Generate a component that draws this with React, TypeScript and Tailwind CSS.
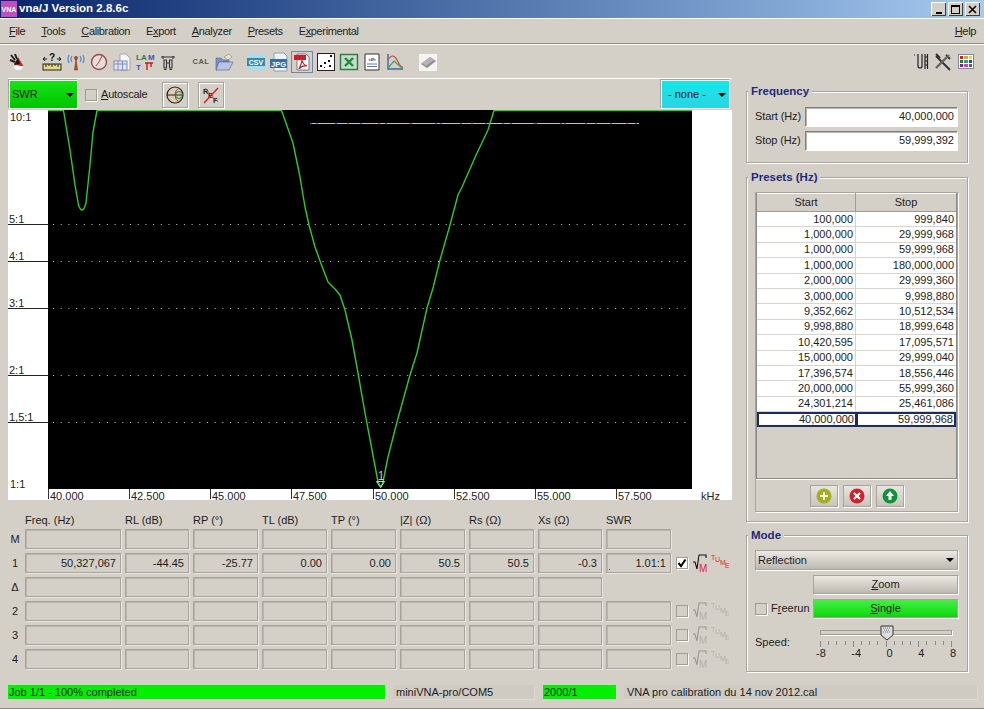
import type { ReactNode } from "react";

const PRESETS = [
  ["100,000", "999,840"],
  ["1,000,000", "29,999,968"],
  ["1,000,000", "59,999,968"],
  ["1,000,000", "180,000,000"],
  ["2,000,000", "29,999,360"],
  ["3,000,000", "9,998,880"],
  ["9,352,662", "10,512,534"],
  ["9,998,880", "18,999,648"],
  ["10,420,595", "17,095,571"],
  ["15,000,000", "29,999,040"],
  ["17,396,574", "18,556,446"],
  ["20,000,000", "55,999,360"],
  ["24,301,214", "25,461,086"],
  ["40,000,000", "59,999,968"],
];

const COLUMNS = [
  { title: "Freq. (Hz)", w: "w-[96px]" },
  { title: "RL (dB)", w: "w-[64px]" },
  { title: "RP (°)", w: "w-[65px]" },
  { title: "TL (dB)", w: "w-[65px]" },
  { title: "TP (°)", w: "w-[65px]" },
  { title: "|Z| (Ω)", w: "w-[65px]" },
  { title: "Rs (Ω)", w: "w-[65px]" },
  { title: "Xs (Ω)", w: "w-[64px]" },
  { title: "SWR", w: "w-[65px]" },
];

const ROWS: { label: string; values?: string[]; cols: number; marker?: "on" | "off" }[] = [
  { label: "M", cols: 9 },
  {
    label: "1",
    cols: 9,
    marker: "on",
    values: ["50,327,067", "-44.45", "-25.77", "0.00", "0.00", "50.5", "50.5", "-0.3", "1.01:1"],
  },
  { label: "Δ", cols: 8 },
  { label: "2", cols: 9, marker: "off" },
  { label: "3", cols: 9, marker: "off" },
  { label: "4", cols: 9, marker: "off" },
];

const GRID_LINES = [
  { y: 224, label: "5:1" },
  { y: 261, label: "4:1" },
  { y: 308, label: "3:1" },
  { y: 375, label: "2:1" },
  { y: 422, label: "1,5:1" },
];

const X_TICKS = [
  { x: 48, label: "40.000" },
  { x: 129, label: "42.500" },
  { x: 210, label: "45.000" },
  { x: 291, label: "47.500" },
  { x: 373, label: "50.000" },
  { x: 454, label: "52.500" },
  { x: 535, label: "55.000" },
  { x: 616, label: "57.500" },
];

const DIP_CURVE =
  "M48 110.5H63.5L70 150L75 185L78.5 205Q82.5 216 86 203L90 165L93 132L97 110.5H281.5L287 126L293 143L300 177L305 207L309 225L315 247L320 261L328 282L335 289L340 295L345 310L352 340L358 373L365 413L372 450L378 482L381 487L383 482L388 457L397 422L410 375L417 353L427 308L433 288L440 260L450 225L458 195L462 187L477 153L488 130L494 110.5H692";

function Mn({ children }: { children: ReactNode }) {
  return <span className="underline underline-offset-1">{children}</span>;
}

function Ruler() {
  return (
    <svg width="20" height="20" viewBox="0 0 20 20">
      <text x="10" y="9" textAnchor="middle" fontSize="10" fontWeight="700" fill="#111">?</text>
      <path d="M1 7h4M1 7l2-2M1 7l2 2M15 7h4M19 7l-2-2M19 7l-2 2" stroke="#111" fill="none" />
      <rect x="1" y="12" width="18" height="6" fill="#e8d880" stroke="#222" />
      <path d="M4 12v3M7 12v2M10 12v3M13 12v2M16 12v3" stroke="#222" />
    </svg>
  );
}

function Ant() {
  return (
    <svg width="20" height="20" viewBox="0 0 20 20">
      <path d="M3 3l4 5M7 2l2 5M2 8l5 2" stroke="#222" strokeWidth="2" />
      <path d="M6 12L10 5l6 10z" fill="#c8281e" />
      <path d="M10 6l2 6-6 1z" fill="#1a1a1a" />
      <path d="M5 14h11l-3 4H8z" fill="#f4f4f4" />
    </svg>
  );
}

function Antenna() {
  return (
    <svg width="20" height="20" viewBox="0 0 20 20" fill="none">
      <path d="M3 3Q1 7 3 11M17 3Q19 7 17 11M6 4Q4 7 6 10M14 4Q16 7 14 10" stroke="#5a8ac8" strokeWidth="1.2" />
      <circle cx="10" cy="6" r="2" fill="#a05020" />
      <path d="M8.5 18L10 7l1.5 11z" fill="#b05a20" stroke="#803010" strokeWidth=".6" />
    </svg>
  );
}

function Clock() {
  return (
    <svg width="20" height="20" viewBox="0 0 20 20" fill="none">
      <circle cx="10" cy="10" r="7.5" fill="#e4ddd8" stroke="#a04848" strokeWidth="1.4" />
      <path d="M10 10L13 4M10 10L7 14" stroke="#a04848" />
    </svg>
  );
}

function Sheet() {
  return (
    <svg width="20" height="20" viewBox="0 0 20 20">
      <path d="M8 2h6l4 4v12H8z" fill="#f6f6f6" stroke="#9aa4b8" />
      <rect x="2" y="9" width="13" height="9" fill="#dfe6f2" stroke="#8090b8" />
      <path d="M2 12h13M6 9v9M10.5 9v9" stroke="#8090b8" />
    </svg>
  );
}

function Lamt() {
  return (
    <svg width="20" height="20" viewBox="0 0 20 20" fontSize="8" fontWeight="700" fontFamily="Liberation Sans">
      <text x="1" y="8" fill="#208050">LA</text>
      <text x="13" y="8" fill="#3858a8">M</text>
      <text x="1" y="18" fill="#3858a8">T</text>
      <path d="M10 11h8M12 11v7M16 11v4" stroke="#c02020" strokeWidth="1.4" fill="none" />
    </svg>
  );
}

function Transistor() {
  return (
    <svg width="20" height="20" viewBox="0 0 20 20" fill="none" stroke="#333" strokeWidth="1.1">
      <path d="M3 5h14M5 4v3M15 4v3M6 8h2.5v8H6zM11.5 8H14v8h-2.5z" />
      <path d="M8.5 11h3M6 17.5h2.5M11.5 17.5H14" />
    </svg>
  );
}

function Cal() {
  return (
    <svg width="22" height="20" viewBox="0 0 22 20">
      <text x="11" y="12" textAnchor="middle" fontSize="7.5" fontWeight="700" letterSpacing=".5" fontFamily="Liberation Sans" fill="#555">CAL</text>
    </svg>
  );
}

function Folder() {
  return (
    <svg width="20" height="20" viewBox="0 0 20 20">
      <path d="M10 5l5-3 3 3-4 3z" fill="#e8e4c8" stroke="#8a8a70" strokeWidth=".6" />
      <path d="M2 6h5l2 2h6v2H6l-3 8H2z" fill="#7f93c4" stroke="#50608e" strokeWidth=".6" />
      <path d="M5 10h14l-4 8H2z" fill="#b8c4e4" stroke="#50608e" strokeWidth=".6" />
    </svg>
  );
}

function Csv() {
  return (
    <svg width="20" height="20" viewBox="0 0 20 20">
      <rect x="1" y="2" width="18" height="16" fill="#a8dcf0" />
      <rect x="1" y="6" width="18" height="8" fill="#3a86a8" />
      <text x="10" y="13" textAnchor="middle" fontSize="7" fontWeight="700" fontFamily="Liberation Sans" fill="#fff">CSV</text>
    </svg>
  );
}

function Jpg() {
  return (
    <svg width="20" height="20" viewBox="0 0 20 20">
      <path d="M5 1h10l3 3v15H5z" fill="#eef2f6" stroke="#8ca0b4" />
      <rect x="1" y="7" width="17" height="9" fill="#3b6ea4" />
      <text x="9.5" y="14.5" textAnchor="middle" fontSize="7.5" fontWeight="700" fontFamily="Liberation Sans" fill="#fff">JPG</text>
    </svg>
  );
}

function Pdf() {
  return (
    <svg width="20" height="20" viewBox="0 0 20 20">
      <path d="M5 2h9l3 3v13H5z" fill="#fff" stroke="#777" />
      <rect x="2" y="3" width="12" height="5" fill="#c8202a" />
      <path d="M7 17Q10 10 10 8Q11 13 15 14Q10 13 7 17z" fill="none" stroke="#c8202a" strokeWidth="1.2" />
    </svg>
  );
}

function Dots() {
  return (
    <svg width="20" height="20" viewBox="0 0 20 20">
      <rect x="1.5" y="1.5" width="17" height="17" fill="#fff" stroke="#222" />
      <g fill="#111">
        <rect x="4" y="13" width="2" height="2" />
        <rect x="8" y="10" width="2" height="2" />
        <rect x="12" y="8" width="2" height="2" />
        <rect x="14" y="3" width="2" height="2" />
        <rect x="13" y="13" width="2" height="2" />
        <rect x="8" y="15" width="1" height="1" />
      </g>
    </svg>
  );
}

function Excel() {
  return (
    <svg width="20" height="20" viewBox="0 0 20 20">
      <rect x="1.5" y="2.5" width="17" height="15" fill="#c4dcc8" stroke="#2a7a48" strokeWidth="1.4" />
      <path d="M6 6l8 8M14 6l-8 8" stroke="#1e8a3c" strokeWidth="2.4" />
    </svg>
  );
}

function Xml() {
  return (
    <svg width="20" height="20" viewBox="0 0 20 20">
      <path d="M3 2h14v16H3z" fill="#fff" stroke="#333" />
      <text x="10" y="9" textAnchor="middle" fontSize="6" fontWeight="700" fontFamily="Liberation Sans" fill="#1c5aa8">‹ø›</text>
      <path d="M5 12h10M5 14.5h10" stroke="#5478b8" />
    </svg>
  );
}

function ChartIcon() {
  return (
    <svg width="20" height="20" viewBox="0 0 20 20" fill="none">
      <path d="M3 2v15h15" stroke="#3a68b4" strokeWidth="1.4" />
      <path d="M3 8Q8 0 12 8T18 15" stroke="#d04848" strokeWidth="1.2" />
      <path d="M3 16L9 9l9 8" stroke="#40a050" strokeWidth="1.2" />
    </svg>
  );
}

function Chip() {
  return (
    <svg width="22" height="20" viewBox="0 0 22 20">
      <rect x="2" y="2" width="18" height="17" fill="#f4f4f2" />
      <path d="M4 12l9-7 6 4-9 7z" fill="#8c8c8c" />
      <path d="M5 11l8-6 4 3-8 6z" fill="#b4b4b4" />
    </svg>
  );
}

function Thermo() {
  return (
    <svg width="20" height="20" viewBox="0 0 20 20" fill="none" stroke="#222" strokeWidth="1.2">
      <path d="M7 2v12a2 2 0 0 0 4 0V2M14 2v15M16.5 2v15M14 5h3M14 9h3M14 13h3" />
      <path d="M3 3h1" />
    </svg>
  );
}

function Tools() {
  return (
    <svg width="20" height="20" viewBox="0 0 20 20" fill="none" stroke="#333" strokeWidth="2">
      <path d="M3 4l14 14M13 3l4 4" />
      <path d="M16 3L3 16" strokeWidth="2.4" stroke="#666" />
      <path d="M3 2l4 4" />
    </svg>
  );
}

function Palette() {
  const colors = ["#d02020", "#e8a020", "#e8e020", "#208020", "#20a0a0", "#2040c0", "#8020a0", "#e040a0", "#606060"];
  return (
    <div className="grid h-[15px] w-[16px] grid-cols-3 gap-px border border-[#8088a0] bg-white p-px">
      {colors.map((c) => (
        <span key={c} style={{ backgroundColor: c }} />
      ))}
    </div>
  );
}

const LEFT_ICONS = [
  { el: <Ant />, cls: "" },
  { el: <Ruler />, cls: "ml-[14px]" },
  { el: <Antenna />, cls: "ml-[4px]" },
  { el: <Clock />, cls: "ml-[3px]" },
  { el: <Sheet />, cls: "ml-[3px]" },
  { el: <Lamt />, cls: "ml-[3px]" },
  { el: <Transistor />, cls: "ml-[3px]" },
  { el: <Cal />, cls: "ml-[12px]" },
  { el: <Folder />, cls: "ml-[2px]" },
  { el: <Csv />, cls: "ml-[12px]" },
  { el: <Jpg />, cls: "ml-[3px]" },
  { el: <Pdf />, cls: "ml-[3px] outline outline-[#6f87ad]" },
  { el: <Dots />, cls: "ml-[4px]" },
  { el: <Excel />, cls: "ml-[3px]" },
  { el: <Xml />, cls: "ml-[3px]" },
  { el: <ChartIcon />, cls: "ml-[3px]" },
  { el: <Chip />, cls: "ml-[12px]" },
];

function TitleBar() {
  return (
    <div className="flex h-[18px] items-center bg-gradient-to-r from-[#0a246a] to-[#a6caf0] pl-[1px] pr-[4px]">
      <div className="flex h-[16px] w-[16px] items-center justify-center bg-[#c050c0] text-[7px] font-bold leading-none text-white">
        VNA
      </div>
      <span className="ml-[2px] text-[11.5px] font-bold text-white">vna/J Version 2.8.6c</span>
      <div className="ml-auto flex gap-[2px]">
        <WinButton>
          <span className="mt-[8px] h-[2px] w-[6px] bg-black" />
        </WinButton>
        <WinButton>
          <span className="h-[9px] w-[9px] border border-t-2 border-black" />
        </WinButton>
        <WinButton>
          <svg width="9" height="9" viewBox="0 0 9 9">
            <path d="M1 1l7 7M8 1l-7 7" stroke="#000" strokeWidth="1.6" />
          </svg>
        </WinButton>
      </div>
    </div>
  );
}

function WinButton({ children }: { children: ReactNode }) {
  return (
    <div className="flex h-[14px] w-[15px] items-center justify-center bg-[#d4d0c8] shadow-[inset_1px_1px_0_#fff,inset_-1px_-1px_0_#404040]">
      {children}
    </div>
  );
}

function MenuBar() {
  return (
    <div className="flex h-[26px] items-center gap-[16px] border-y border-t-white border-b-[#8c8a84] pl-[9px] pr-[8px] tracking-[-0.35px] text-[#222]">
      <span><Mn>F</Mn>ile</span>
      <span><Mn>T</Mn>ools</span>
      <span><Mn>C</Mn>alibration</span>
      <span>E<Mn>x</Mn>port</span>
      <span><Mn>A</Mn>nalyzer</span>
      <span><Mn>P</Mn>resets</span>
      <span>E<Mn>x</Mn>perimental</span>
      <span className="ml-auto"><Mn>H</Mn>elp</span>
    </div>
  );
}

function Toolbar() {
  return (
    <div className="flex h-[34px] items-center border-t border-white pl-[8px] pr-[10px]">
      {LEFT_ICONS.map((icon, i) => (
        <div key={i} className={`flex h-[20px] items-center justify-center ${icon.cls}`}>
          {icon.el}
        </div>
      ))}
      <div className="ml-auto flex items-center">
        <Thermo />
        <span className="ml-[2px]"><Tools /></span>
        <span className="ml-[5px]"><Palette /></span>
      </div>
    </div>
  );
}

function ChartBar() {
  return (
    <div className="flex h-[32px] items-center border-t border-white pl-[1px] pr-[2px]">
      <div className="flex h-[29px] w-[69px] items-center justify-between border border-white bg-gradient-to-b from-[#14e414] to-[#00c400] pl-[2px] pr-[3px] shadow-[-1px_-1px_0_#a8a49c]">
        <span>SWR</span>
        <Caret />
      </div>
      <Checkbox className="ml-[7px]" />
      <span className="ml-[4px] tracking-[-0.2px]"><Mn>A</Mn>utoscale</span>
      <IconButton className="ml-[14px]">
        <svg width="20" height="20" viewBox="0 0 20 20" fill="none">
          <circle cx="10" cy="10" r="8" fill="#d8d0b8" stroke="#222" strokeWidth="1.2" />
          <path d="M2 10h16" stroke="#222" />
          <path d="M10 10Q10 5 14 3M10 10Q10 15 14 17" stroke="#b04020" />
          <circle cx="14" cy="10" r="3.5" stroke="#208040" />
        </svg>
      </IconButton>
      <IconButton className="ml-[10px]">
        <svg width="20" height="20" viewBox="0 0 20 20">
          <text x="2" y="9" fontSize="7.5" fontWeight="700" fill="#222">R</text>
          <text x="7" y="13" fontSize="7.5" fontWeight="700" fill="#222">E</text>
          <text x="12" y="18" fontSize="7.5" fontWeight="700" fill="#222">F</text>
          <path d="M3 18L17 3" stroke="#d82020" strokeWidth="1.4" />
          <path d="M4 3l13 14" stroke="#d82020" strokeWidth=".6" />
        </svg>
      </IconButton>
      <div className="ml-auto flex h-[29px] w-[69px] items-center justify-between border border-white bg-gradient-to-b from-[#10e8e8] to-[#28d4e4] pl-[6px] pr-[3px] shadow-[-1px_-1px_0_#a8a49c]">
        <span>- none -</span>
        <Caret />
      </div>
    </div>
  );
}

function Caret() {
  return <span className="h-0 w-0 border-x-[4px] border-t-[4px] border-x-transparent border-t-black" />;
}

function Checkbox({ className = "", checked = false }: { className?: string; checked?: boolean }) {
  return (
    <span
      className={`flex h-[12px] w-[12px] shrink-0 items-center justify-center border border-[#a09c94] ${checked ? "bg-white" : "bg-[#d4d0c8]"} shadow-[1px_1px_0_#fff] ${className}`}
    >
      {checked && (
        <svg width="10" height="10" viewBox="0 0 10 10" fill="none">
          <path d="M1.5 5l2.5 3 4.5-6.5" stroke="#000" strokeWidth="2" />
        </svg>
      )}
    </span>
  );
}

function IconButton({ children, className = "" }: { children: ReactNode; className?: string }) {
  return (
    <div
      className={`flex h-[26px] w-[26px] items-center justify-center border border-[#a8a49c] shadow-[1px_1px_0_#fff,inset_1px_1px_0_#fff] ${className}`}
    >
      {children}
    </div>
  );
}

function Chart() {
  return (
    <svg className="block h-[392px] w-[724px]" viewBox="8 110 724 392" fontFamily="Liberation Sans" fontSize="11">
      <rect x="8" y="110" width="724" height="390" fill="#fff" />
      <rect x="48" y="110" width="644" height="379" fill="#000" />
      {GRID_LINES.map((g) => (
        <g key={g.y}>
          <line x1="8" x2="48" y1={g.y + 0.5} y2={g.y + 0.5} stroke="#222" />
          <line x1="53" x2="692" y1={g.y + 0.5} y2={g.y + 0.5} stroke="#c4c4c4" strokeDasharray="1 6.7" />
          <text x="9" y={g.y - 1} fill="#222">{g.label}</text>
        </g>
      ))}
      <text x="10" y="121" fill="#222">10:1</text>
      <text x="10" y="488" fill="#222">1:1</text>
      <line x1="310" x2="639" y1="123.5" y2="123.5" stroke="#c8c0c0" />
      <line x1="310" x2="639" y1="123.5" y2="123.5" stroke="#5a6ac8" strokeDasharray="2 23" />
      <line x1="316" x2="639" y1="123.5" y2="123.5" stroke="#c85a5a" strokeDasharray="2 29" />
      <path d={DIP_CURVE} fill="none" stroke="#2ccc2c" strokeWidth="1.4" strokeLinejoin="round" />
      <path d="M376.5 481.5h8l-4 6z" fill="none" stroke="#c8dcc8" />
      <text x="381" y="480" textAnchor="middle" fontSize="12" fill="#c4c4c4">1</text>
      {X_TICKS.map((t) => (
        <g key={t.x}>
          <line x1={t.x + 0.5} x2={t.x + 0.5} y1="489" y2="499" stroke="#333" />
          <text x={t.x + 2} y="499.5" fill="#222">{t.label}</text>
        </g>
      ))}
      <text x="701" y="499.5" fill="#222">kHz</text>
    </svg>
  );
}

function MiniIcons({ active }: { active: boolean }) {
  const c = active ? "#d82828" : "#b4b0a8";
  const ink = active ? "#111" : "#9c9890";
  return (
    <span className="ml-[4px] flex items-center gap-[2px]">
      <svg width="17" height="20" viewBox="0 0 17 20" fontFamily="Liberation Sans">
        <path d="M1 9l2 0 2 7 2-14h7v3" fill="none" stroke={ink} strokeWidth="1.1" />
        <text x="7" y="19" fontSize="10" fill={c}>M</text>
      </svg>
      <svg width="18" height="20" viewBox="0 0 18 20" fontFamily="Liberation Sans" fontSize="7" fill={c}>
        <text x="0" y="7">T</text>
        <text x="4" y="9">U</text>
        <text x="9" y="12">M</text>
        <text x="14" y="15">E</text>
      </svg>
    </span>
  );
}

function DataTable() {
  return (
    <div className="flex flex-col pt-[9px]">
      <div className="flex h-[18px] items-center gap-[4px] pl-[17px]">
        {COLUMNS.map((c) => (
          <span key={c.title} className={c.w}>{c.title}</span>
        ))}
      </div>
      <div className="flex flex-col gap-[4px]">
        {ROWS.map((row) => (
          <div key={row.label} className="flex h-[20px] items-center">
            <span className="w-[17px] pr-[3px] text-center">{row.label}</span>
            <div className="flex gap-[4px]">
              {COLUMNS.slice(0, row.cols).map((c, i) => (
                <div
                  key={c.title}
                  className={`relative flex h-[20px] items-center justify-end border border-[#a8a49c] pr-[4px] shadow-[1px_1px_0_#e8e6e0,inset_1px_1px_0_#bcb8b0] ${c.w}`}
                >
                  {row.values?.[i]}
                  {row.values && c.title === "SWR" && (
                    <span className="absolute bottom-[2px] left-[2px] h-px w-px bg-[#333]" />
                  )}
                </div>
              ))}
            </div>
            {row.marker && (
              <>
                <Checkbox className="ml-[5px]" checked={row.marker === "on"} />
                <MiniIcons active={row.marker === "on"} />
              </>
            )}
          </div>
        ))}
      </div>
    </div>
  );
}

function Group({ title, className, children }: { title: string; className: string; children: ReactNode }) {
  return (
    <div className={`relative border border-[#a8a49c] shadow-[1px_1px_0_#fff,inset_1px_1px_0_#fff] ${className}`}>
      <span className="absolute -top-[8px] left-[1px] bg-[#d4d0c8] pl-[3px] pr-[3px] text-[11.5px] font-bold leading-[15px] text-[#1c2a78]">
        {title}
      </span>
      {children}
    </div>
  );
}

function FreqField({ label, value }: { label: string; value: string }) {
  return (
    <div className="flex h-[19px] items-center">
      <span className="w-[50px] tracking-[-0.1px]">{label}</span>
      <div className="flex h-[19px] w-[152px] items-center justify-end bg-white pr-[3px] shadow-[inset_1px_1px_0_#808080,inset_2px_2px_0_#b8b4ac,1px_1px_0_#fff]">
        {value}
      </div>
    </div>
  );
}

function RoundButton({ children }: { children: ReactNode }) {
  return (
    <div className="flex h-[22px] w-[28px] items-center justify-center border border-[#a8a49c] bg-gradient-to-b from-[#e8e6e0] to-[#c8c4bc] shadow-[1px_1px_0_#fff]">
      {children}
    </div>
  );
}

function SideBar() {
  return (
    <div className="flex w-[223px] flex-col pt-[13px]">
      <Group title="Frequency" className="h-[72px] w-[222px] pl-[8px] pt-[15px]">
        <div className="flex flex-col gap-[5px]">
          <FreqField label="Start (Hz)" value="40,000,000" />
          <FreqField label="Stop (Hz)" value="59,999,392" />
        </div>
      </Group>
      <Group title="Presets (Hz)" className="mt-[14px] h-[345px] w-[222px] pl-[8px] pt-[14px]">
        <div className="flex h-[320px] w-[203px] flex-col border border-[#a8a49c] shadow-[1px_1px_0_#fff]">
          <div className="h-[286px] border-x border-b border-[#8c8a84] bg-[#d4d0c8] shadow-[0_1px_0_#fff]">
            <div className="flex h-[19px] border-b border-[#a09c94] bg-[#d4d0c8] shadow-[inset_0_1px_0_#fff]">
              <span className="flex w-[99px] items-center justify-center border-r border-[#a09c94]">Start</span>
              <span className="flex flex-1 items-center justify-center">Stop</span>
            </div>
            {PRESETS.map((row, i) => {
              const selected = i === PRESETS.length - 1;
              return (
                <div key={i} className="flex h-[15.4px] leading-[15px]">
                  {row.map((v, j) => (
                    <span
                      key={j}
                      className={`flex items-center justify-end pr-[1px] ${j === 0 ? "w-[99px] border-r" : "flex-1"} ${
                        selected ? "border-2 border-[#1c2a68] bg-white" : "border-b border-[#d8d5cf] border-r-[#d8d5cf] bg-white pr-[2px]"
                      }`}
                    >
                      {v}
                    </span>
                  ))}
                </div>
              );
            })}
          </div>
          <div className="flex flex-1 items-center justify-center gap-[5px] pt-px">
            <RoundButton>
              <svg width="18" height="18" viewBox="0 0 18 18">
                <circle cx="9" cy="9" r="7.5" fill="#a4ac20" />
                <path d="M9 5v8M5 9h8" stroke="#f0f0d8" strokeWidth="2" />
              </svg>
            </RoundButton>
            <RoundButton>
              <svg width="18" height="18" viewBox="0 0 18 18">
                <circle cx="9" cy="9" r="7.5" fill="#d0202c" />
                <path d="M6 6l6 6M12 6l-6 6" stroke="#fff" strokeWidth="2.2" />
              </svg>
            </RoundButton>
            <RoundButton>
              <svg width="18" height="18" viewBox="0 0 18 18">
                <circle cx="9" cy="9" r="7.5" fill="#0c9438" />
                <path d="M9 4l4 5h-2.5v4h-3V9H5z" fill="#fff" />
              </svg>
            </RoundButton>
          </div>
        </div>
      </Group>
      <Group title="Mode" className="mt-[13px] h-[137px] w-[222px] pl-[8px] pt-[14px]">
        <div className="flex h-[20px] w-[203px] items-center justify-between border border-[#a8a49c] bg-gradient-to-b from-[#ece9e3] to-[#bdb9b0] pl-[2px] pr-[3px] shadow-[1px_1px_0_#fff]">
          <span>Reflection</span>
          <Caret />
        </div>
        <div className="ml-[58px] mt-[5px] flex h-[19px] w-[145px] items-center justify-center border border-[#a8a49c] bg-gradient-to-b from-[#ece9e3] to-[#bdb9b0] shadow-[1px_1px_0_#fff]">
          <span><Mn>Z</Mn>oom</span>
        </div>
        <div className="mt-[5px] flex h-[19px] items-center">
          <Checkbox />
          <span className="ml-[4px] w-[42px]">F<Mn>r</Mn>eerun</span>
          <div className="flex h-[19px] w-[145px] items-center justify-center border border-[#a8a49c] bg-gradient-to-b from-[#40f040] to-[#00d800] shadow-[1px_1px_0_#fff]">
            <span><Mn>S</Mn>ingle</span>
          </div>
        </div>
        <div className="mt-[4px] flex">
          <span className="mt-[15px] w-[65px]">Speed:</span>
          <div className="w-[132px]">
            <div className="relative mt-[8px] h-[5px] w-[132px] border border-[#a09c94] shadow-[1px_1px_0_#fff]">
              <svg className="absolute -top-[6px] left-[59px]" width="14" height="16" viewBox="0 0 14 16">
                <path d="M1 1h12v9l-6 5-6-5z" fill="#ddd" stroke="#333" />
                <path d="M3 3h8M4 5h6M3 7h8" stroke="#777" strokeDasharray="1 1" />
              </svg>
            </div>
            <div className="mt-[6px] flex h-[6px] justify-between">
              {Array.from({ length: 17 }, (_, i) => (
                <span key={i} className={`w-px bg-[#8c8a84] ${i % 4 === 0 ? "h-[6px]" : "h-[4px]"}`} />
              ))}
            </div>
            <div className="-ml-[4px] -mr-[4px] mt-[1px] flex justify-between">
              <span>-8</span>
              <span>-4</span>
              <span>0</span>
              <span>4</span>
              <span>8</span>
            </div>
          </div>
        </div>
      </Group>
    </div>
  );
}

function StatusBar() {
  return (
    <div className="flex h-[14px] pl-[8px] leading-[14px]">
      <div className="w-[377px] bg-[#00f000] pl-px">Job 1/1 - 100% completed</div>
      <div className="ml-[8px] w-[141px] bg-[#cfcbc3] pl-[3px] shadow-[1px_1px_0_#dcd9d2]">miniVNA-pro/COM5</div>
      <div className="ml-[9px] w-[73px] bg-[#00f000] pl-px">2000/1</div>
      <div className="ml-[8px] w-[353px] bg-[#cfcbc3] pl-[3px] shadow-[1px_1px_0_#dcd9d2]">VNA pro calibration du 14 nov 2012.cal</div>
    </div>
  );
}

export default function App() {
  return (
    <div className="flex h-[710px] w-[984px] flex-col overflow-hidden bg-[#d4d0c8] font-['Liberation_Sans',sans-serif] text-[11px] leading-none text-[#1c1c1c]">
      <TitleBar />
      <MenuBar />
      <Toolbar />
      <div className="flex h-[602px]">
        <div className="ml-[8px] w-[738px]">
          <div className="w-[724px]">
            <ChartBar />
            <Chart />
          </div>
          <DataTable />
        </div>
        <SideBar />
      </div>
      <div className="mt-[5px]">
        <StatusBar />
      </div>
      <div className="mt-[9px] h-[2px] border-t border-[#8c8a84] bg-white" />
    </div>
  );
}
